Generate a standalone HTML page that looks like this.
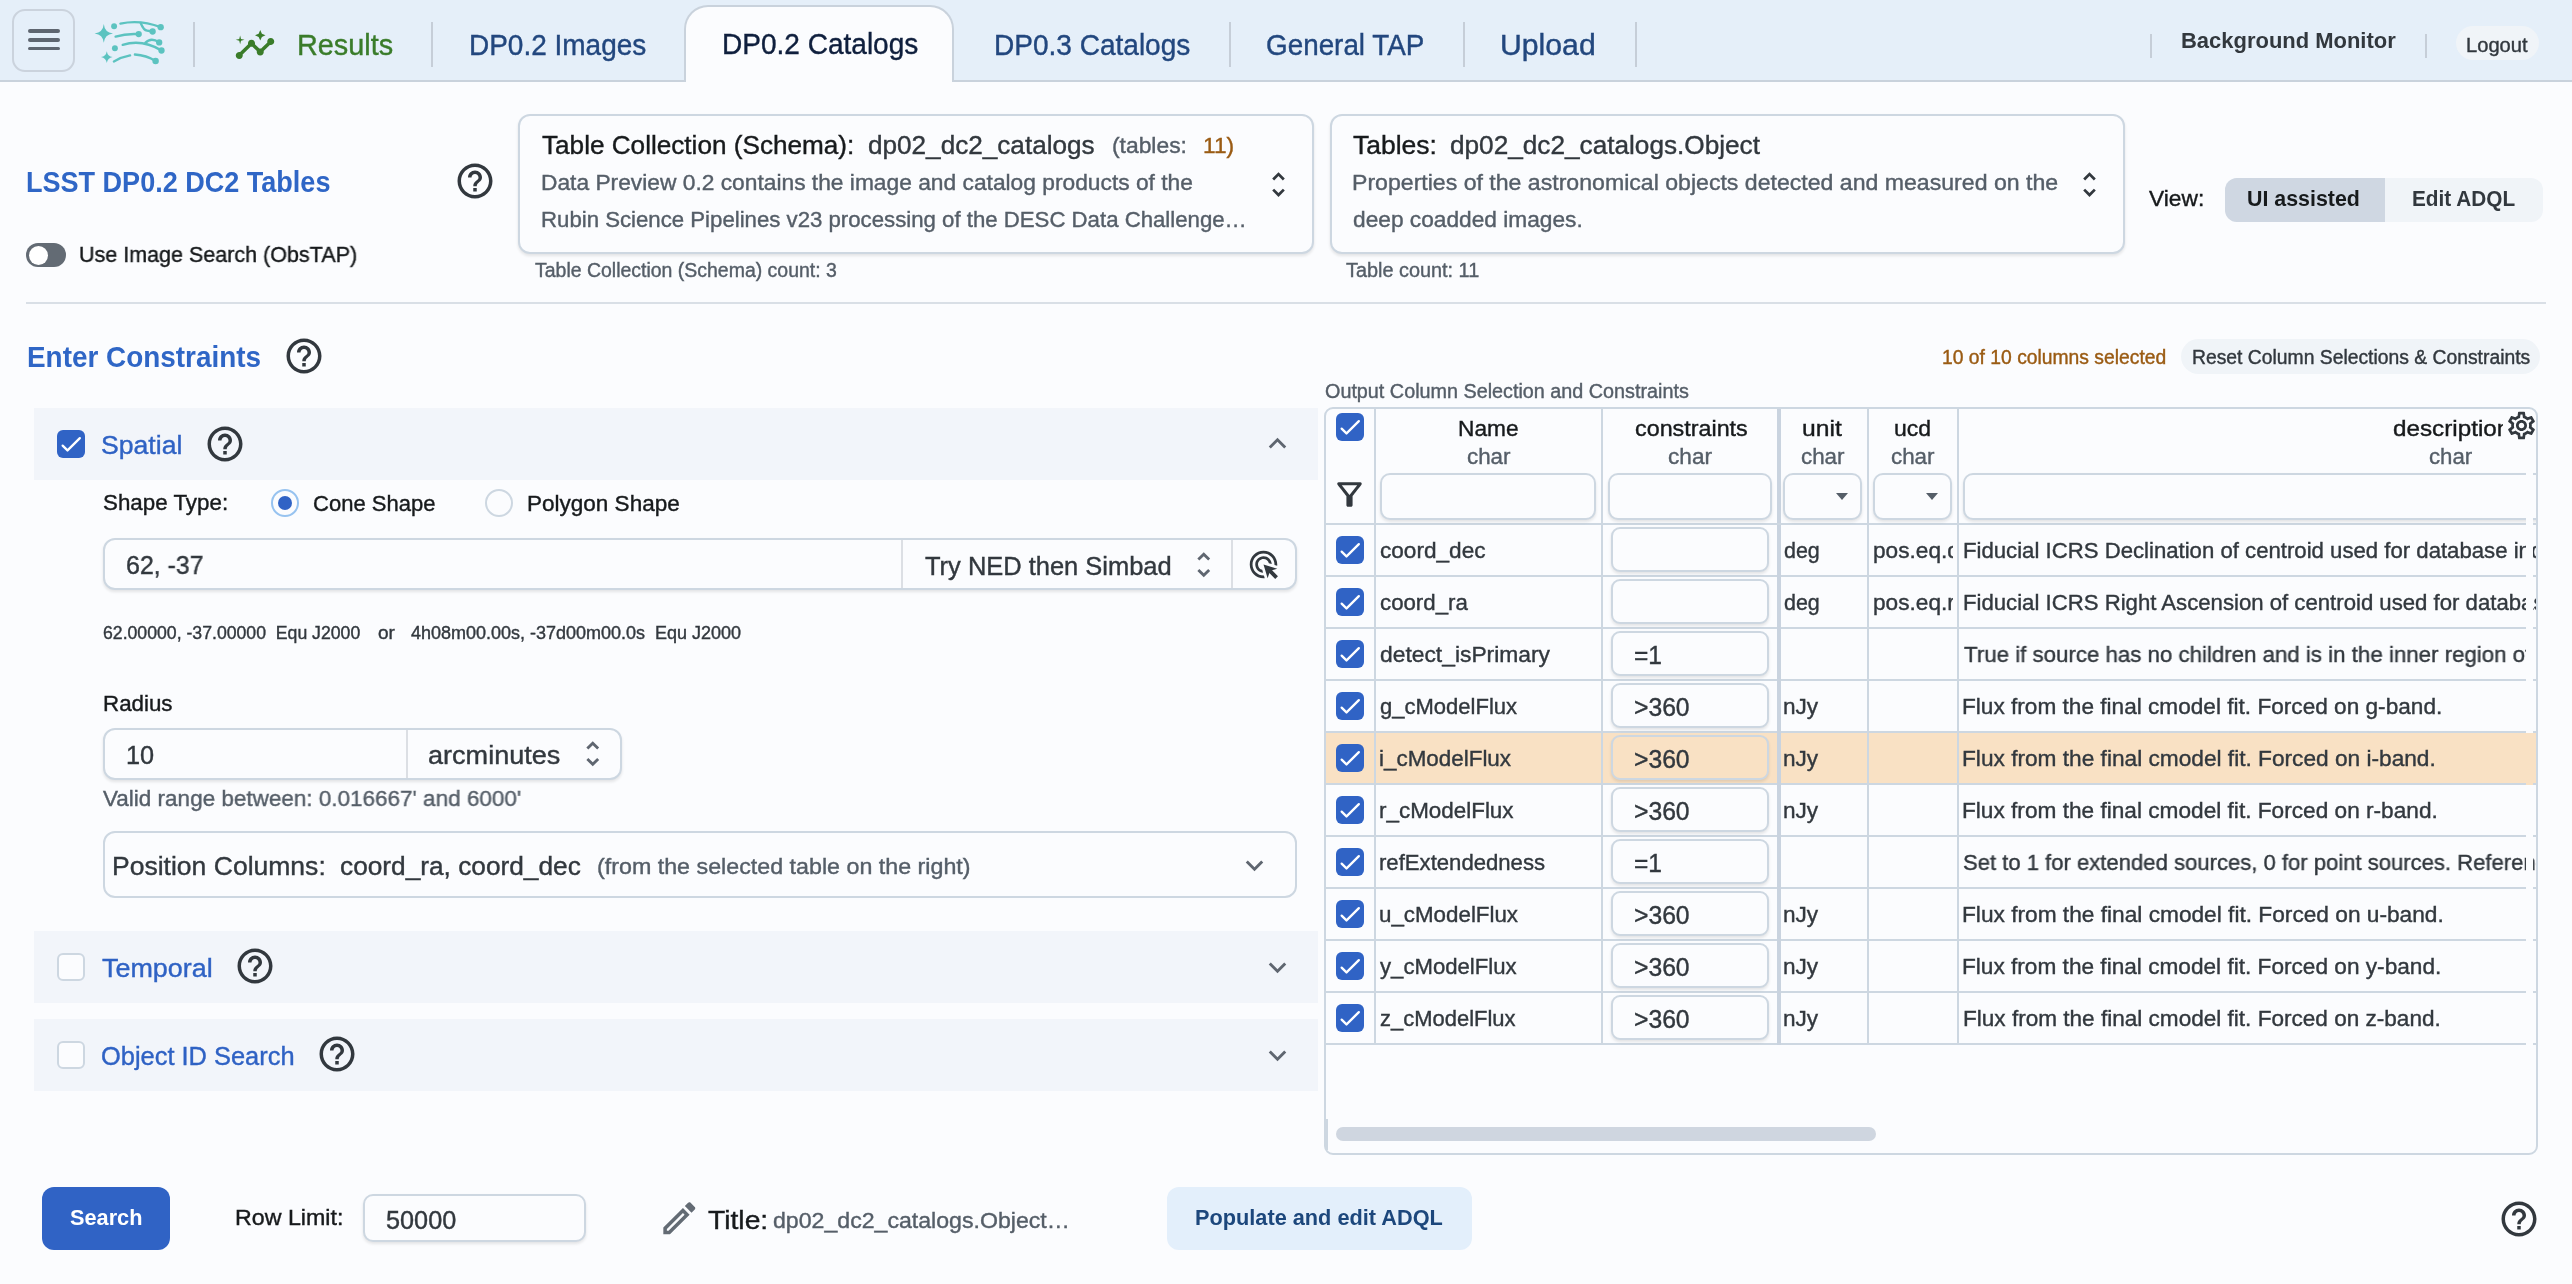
<!DOCTYPE html>
<html><head><meta charset="utf-8"><title>Firefly TAP Search</title><style>
html,body{margin:0;padding:0;width:2572px;height:1284px;}
body{width:2572px;height:1284px;background:#fbfcfe;overflow:hidden;position:relative;font-family:"Liberation Sans",sans-serif;}
#root{position:absolute;left:0;top:0;width:2572px;height:1284px;will-change:transform;}
.b{position:absolute;box-sizing:border-box;}
.t{position:absolute;white-space:pre;line-height:1;-webkit-text-stroke:0.4px;}
</style></head><body><div id="root">
<div class="b" style="left:0px;top:0px;width:2572px;height:82px;background:#e5eff9;border-bottom:2px solid #c9d2dc;"></div>
<div class="b" style="left:12px;top:9px;width:63px;height:63px;border:2px solid #cbd3dd;border-radius:13px;"></div>
<div class="b" style="left:28.2px;top:29.3px;width:31.599999999999998px;height:3.599999999999998px;background:#5f6670;border-radius:2px;"></div>
<div class="b" style="left:28.2px;top:38.1px;width:31.599999999999998px;height:3.5999999999999943px;background:#5f6670;border-radius:2px;"></div>
<div class="b" style="left:28.2px;top:46.900000000000006px;width:31.599999999999998px;height:3.5999999999999943px;background:#5f6670;border-radius:2px;"></div>
<svg class="b" style="left:85px;top:10px" width="100" height="65" viewBox="0 0 100 65"><g fill="#5cc3c0" stroke="none">
<path d="M18.8 13.999999999999998 Q19.628 22.554 28.0 23.4 Q19.628 24.246 18.8 32.8 Q17.972 24.246 9.600000000000001 23.4 Q17.972 22.554 18.8 13.999999999999998 Z"/>
<path d="M21.8 41.2 Q22.612000000000002 46.274 27.6 47.1 Q22.612000000000002 47.926 21.8 53.0 Q20.988 47.926 16.0 47.1 Q20.988 46.274 21.8 41.2 Z"/>
<circle cx="29.1" cy="16.3" r="2.950"/><circle cx="29.9" cy="38.3" r="2.950"/>
<circle cx="75.700" cy="17.200" r="3.150"/><circle cx="67.600" cy="21.500" r="3.150"/><circle cx="53.700" cy="24.100" r="3.150"/>
<circle cx="74.200" cy="32.400" r="3.150"/><circle cx="76.500" cy="40.500" r="3.150"/><circle cx="70.600" cy="51.100" r="3.250"/>
</g>
<g fill="none" stroke="#5cc3c0" stroke-width="2.350" stroke-linecap="round">
<path d="M35.400 13.600 C46 11.300 60 11.200 75.700 17.200"/>
<path d="M55.700 13 C57.500 17.500 59 20.300 62 20.600 L67.600 21.500"/>
<path d="M30.600 26.600 C38 24.300 45 23.600 53.700 24.100"/>
<path d="M37.700 34.900 C50 31 64 33 76.500 40.500"/>
<path d="M60.300 32.900 C63.500 29.500 68 28.300 74.200 32.400"/>
<path d="M28.900 51.400 C34 48.500 39 46.500 45.100 45.400"/>
<path d="M49.900 44.500 C58 45 65 47.500 70.600 51.100"/>
</g></svg>
<div class="b" style="left:193px;top:22px;width:2px;height:45px;background:#c6ced8;"></div>
<div class="b" style="left:431px;top:22px;width:2px;height:45px;background:#c6ced8;"></div>
<div class="b" style="left:1229px;top:22px;width:2px;height:45px;background:#c6ced8;"></div>
<div class="b" style="left:1463px;top:22px;width:2px;height:45px;background:#c6ced8;"></div>
<div class="b" style="left:1635px;top:22px;width:2px;height:45px;background:#c6ced8;"></div>
<div class="b" style="left:2150px;top:34px;width:2px;height:24px;background:#c6ced8;"></div>
<div class="b" style="left:2425px;top:34px;width:2px;height:24px;background:#c6ced8;"></div>
<svg class="b" style="left:233.5px;top:23.6px;" width="42" height="42" viewBox="0 0 24 24" fill="#3a7c2a"><path d="M21 8c-1.450 0-2.260 1.440-1.930 2.510l-3.550 3.560c-.300-.090-.740-.090-1.040 0l-2.550-2.550C12.270 10.450 11.460 9 10 9c-1.450 0-2.270 1.440-1.930 2.520l-4.560 4.550C2.440 15.740 1 16.550 1 18c0 1.100.900 2 2 2 1.450 0 2.260-1.440 1.930-2.510l4.550-4.560c.300.090.740.090 1.040 0l2.550 2.550C12.730 16.550 13.540 18 15 18c1.450 0 2.270-1.440 1.930-2.520l3.560-3.550c1.070.330 2.510-.480 2.510-1.930 0-1.100-.900-2-2-2z"/><path transform="translate(0,0.45)" d="m15 9 .940-2.070L18 6l-2.060-.930L15 3l-.920 2.070L12 6l2.080.930z"/><path transform="translate(0,0.5)" d="M3.500 11 4 9l2-.500L4 8l-.500-2L3 8l-2 .500L3 9z"/></svg>
<span class="t" style="top:29.61px;font-size:30px;color:#3a7c2a;left:296.58px;transform:scaleX(0.9605);transform-origin:0 0;">Results</span>
<span class="t" style="top:29.61px;font-size:30px;color:#22477e;left:468.63px;transform:scaleX(0.9327);transform-origin:0 0;">DP0.2 Images</span>
<div class="b" style="left:684px;top:5px;width:270px;height:77px;background:#fbfcfe;border:2px solid #c9d2dc;border-radius:24px 24px 0 0;border-bottom:none;"></div>
<span class="t" style="top:29.11px;font-size:30px;color:#0f1f3d;left:721.63px;transform:scaleX(0.9343);transform-origin:0 0;">DP0.2 Catalogs</span>
<span class="t" style="top:29.61px;font-size:30px;color:#22477e;left:993.63px;transform:scaleX(0.9343);transform-origin:0 0;">DP0.3 Catalogs</span>
<span class="t" style="top:29.61px;font-size:30px;color:#22477e;left:1266.07px;transform:scaleX(0.9281);transform-origin:0 0;">General TAP</span>
<span class="t" style="top:29.61px;font-size:30px;color:#22477e;left:1500.49px;transform:scaleX(1.0067);transform-origin:0 0;">Upload</span>
<span class="t" style="top:30.45px;font-size:22.5px;color:#32383e;font-weight:700;-webkit-text-stroke:0;left:2181.02px;transform:scaleX(0.9761);transform-origin:0 0;">Background Monitor</span>
<div class="b" style="left:2456px;top:26px;width:83px;height:34px;background:#f0f4f8;border-radius:17px;"></div>
<span class="t" style="top:34.57px;font-size:20px;color:#32383e;left:2465.99px;transform:scaleX(1.0063);transform-origin:0 0;">Logout</span>
<span class="t" style="top:167.10px;font-size:30px;color:#2f66c6;font-weight:700;-webkit-text-stroke:0;left:26.20px;transform:scaleX(0.9010);transform-origin:0 0;">LSST DP0.2 DC2 Tables</span>
<svg class="b" style="left:454.2px;top:159.5px;" width="42" height="42" viewBox="0 0 24 24" fill="#32383e"><path d="M11 18h2v-2h-2v2zm1-16C6.48 2 2 6.48 2 12s4.48 10 10 10 10-4.48 10-10S17.52 2 12 2zm0 18c-4.41 0-8-3.59-8-8s3.59-8 8-8 8 3.590 8 8-3.590 8-8 8zm0-14c-2.210 0-4 1.790-4 4h2c0-1.100.900-2 2-2s2 .900 2 2c0 2-3 1.750-3 5h2c0-2.250 3-2.500 3-5 0-2.210-1.790-4-4-4z"/></svg>
<div class="b" style="left:26px;top:243px;width:40px;height:24px;background:#636b74;border-radius:12px;"></div>
<div class="b" style="left:28.5px;top:245.5px;width:19.0px;height:19.0px;background:#fff;border-radius:10px;"></div>
<span class="t" style="top:244.15px;font-size:22.5px;color:#171a1c;left:78.54px;transform:scaleX(0.9560);transform-origin:0 0;">Use Image Search (ObsTAP)</span>
<div class="b" style="left:518px;top:114px;width:796px;height:140px;background:#fbfcfe;border:2px solid #cdd7e1;border-radius:12px;box-shadow:0 2px 3px rgba(21,21,21,0.10);"></div>
<span class="t" style="top:132.02px;font-size:26.2px;color:#171a1c;left:542.00px;transform:scaleX(0.9979);transform-origin:0 0;">Table Collection (Schema):</span>
<span class="t" style="top:132.02px;font-size:26.2px;color:#32383e;left:868.00px;transform:scaleX(0.9976);transform-origin:0 0;">dp02_dc2_catalogs</span>
<span class="t" style="top:135.21px;font-size:22.2px;color:#555e68;left:1112.27px;transform:scaleX(1.0298);transform-origin:0 0;">(tables:</span>
<span class="t" style="top:135.21px;font-size:22.2px;color:#9a5b13;left:1203.28px;transform:scaleX(1.0230);transform-origin:0 0;">11)</span>
<span class="t" style="top:171.81px;font-size:22.2px;color:#555e68;left:540.97px;transform:scaleX(1.0263);transform-origin:0 0;">Data Preview 0.2 contains the image and catalog products of the</span>
<span class="t" style="top:208.61px;font-size:22.2px;color:#555e68;left:541.00px;transform:scaleX(1.0005);transform-origin:0 0;">Rubin Science Pipelines v23 processing of the DESC Data Challenge…</span>
<svg class="b" style="left:1262.3px;top:168.3px;" width="33" height="33" viewBox="0 0 24 24" fill="#32383e"><path d="M12 5.83 15.17 9l1.41-1.41L12 3 7.41 7.59 8.83 9 12 5.83zm0 12.34L8.83 15l-1.41 1.41L12 21l4.59-4.59L15.17 15 12 18.170z"/></svg>
<span class="t" style="top:261.38px;font-size:19.4px;color:#555e68;left:535.30px;transform:scaleX(1.0039);transform-origin:0 0;">Table Collection (Schema) count: 3</span>
<div class="b" style="left:1330px;top:114px;width:795px;height:140px;background:#fbfcfe;border:2px solid #cdd7e1;border-radius:12px;box-shadow:0 2px 3px rgba(21,21,21,0.10);"></div>
<span class="t" style="top:132.02px;font-size:26.2px;color:#171a1c;left:1352.70px;transform:scaleX(1.0112);transform-origin:0 0;">Tables:</span>
<span class="t" style="top:132.02px;font-size:26.2px;color:#32383e;left:1450.30px;transform:scaleX(0.9996);transform-origin:0 0;">dp02_dc2_catalogs.Object</span>
<span class="t" style="top:171.81px;font-size:22.2px;color:#555e68;left:1351.66px;transform:scaleX(1.0409);transform-origin:0 0;">Properties of the astronomical objects detected and measured on the</span>
<span class="t" style="top:208.61px;font-size:22.2px;color:#555e68;left:1352.70px;transform:scaleX(1.0235);transform-origin:0 0;">deep coadded images.</span>
<svg class="b" style="left:2073.3px;top:168.3px;" width="33" height="33" viewBox="0 0 24 24" fill="#32383e"><path d="M12 5.83 15.17 9l1.41-1.41L12 3 7.41 7.59 8.83 9 12 5.83zm0 12.34L8.83 15l-1.41 1.41L12 21l4.59-4.59L15.17 15 12 18.170z"/></svg>
<span class="t" style="top:261.38px;font-size:19.4px;color:#555e68;left:1346.00px;transform:scaleX(1.0240);transform-origin:0 0;">Table count: 11</span>
<span class="t" style="top:187.95px;font-size:22.5px;color:#171a1c;left:2149.00px;transform:scaleX(1.0120);transform-origin:0 0;">View:</span>
<div class="b" style="left:2225px;top:178px;width:318px;height:44px;background:#f0f4f8;border-radius:12px;"></div>
<div class="b" style="left:2225px;top:178px;width:160px;height:44px;background:#cfd7e2;border-radius:12px 0 0 12px;"></div>
<span class="t" style="top:187.95px;font-size:22.5px;color:#171a1c;font-weight:700;-webkit-text-stroke:0;left:2247.35px;transform:scaleX(0.9499);transform-origin:0 0;">UI assisted</span>
<span class="t" style="top:187.95px;font-size:22.5px;color:#32383e;font-weight:700;-webkit-text-stroke:0;left:2412.38px;transform:scaleX(0.9235);transform-origin:0 0;">Edit ADQL</span>
<div class="b" style="left:26px;top:302px;width:2520px;height:2px;background:#d9dfe6;"></div>
<span class="t" style="top:342.41px;font-size:30px;color:#2f66c6;font-weight:700;-webkit-text-stroke:0;left:26.64px;transform:scaleX(0.9296);transform-origin:0 0;">Enter Constraints</span>
<svg class="b" style="left:283.2px;top:335.4px;" width="42" height="42" viewBox="0 0 24 24" fill="#32383e"><path d="M11 18h2v-2h-2v2zm1-16C6.48 2 2 6.48 2 12s4.48 10 10 10 10-4.48 10-10S17.52 2 12 2zm0 18c-4.41 0-8-3.59-8-8s3.59-8 8-8 8 3.590 8 8-3.590 8-8 8zm0-14c-2.210 0-4 1.790-4 4h2c0-1.100.900-2 2-2s2 .900 2 2c0 2-3 1.750-3 5h2c0-2.250 3-2.500 3-5 0-2.210-1.790-4-4-4z"/></svg>
<div class="b" style="left:34px;top:408px;width:1284px;height:72px;background:#f2f5fa;"></div>
<div class="b" style="left:57px;top:430px;width:28px;height:28px;background:#3063c5;border-radius:6px;"><svg style="position:absolute;left:0;top:0" width="28" height="28" viewBox="0 0 24 24" fill="#fff"><path d="M9 16.170 5.530 12.700a.9959.9959 0 0 0-1.410 0c-.390.390-.390 1.020 0 1.410l4.180 4.180c.390.390 1.020.390 1.410 0L20.290 7.710c.390-.390.390-1.020 0-1.410a.9959.9959 0 0 0-1.410 0L9 16.170z"/></svg></div>
<span class="t" style="top:432.15px;font-size:26.4px;color:#2f62c4;left:100.99px;transform:scaleX(1.0085);transform-origin:0 0;">Spatial</span>
<svg class="b" style="left:204.0px;top:422.5px;" width="42" height="42" viewBox="0 0 24 24" fill="#32383e"><path d="M11 18h2v-2h-2v2zm1-16C6.48 2 2 6.48 2 12s4.48 10 10 10 10-4.48 10-10S17.52 2 12 2zm0 18c-4.41 0-8-3.59-8-8s3.59-8 8-8 8 3.590 8 8-3.590 8-8 8zm0-14c-2.210 0-4 1.790-4 4h2c0-1.100.900-2 2-2s2 .900 2 2c0 2-3 1.750-3 5h2c0-2.250 3-2.500 3-5 0-2.210-1.790-4-4-4z"/></svg>
<svg class="b" style="left:1259.5px;top:426.0px;" width="35" height="35" viewBox="0 0 24 24" fill="#5f6670"><path d="M7.41 15.41 12 10.83l4.59 4.58L18 14l-6-6-6 6z"/></svg>
<span class="t" style="top:492.25px;font-size:22.5px;color:#171a1c;left:103.01px;transform:scaleX(0.9936);transform-origin:0 0;">Shape Type:</span>
<div class="b" style="left:271px;top:489px;width:28px;height:28px;background:#fbfcfe;border:2px solid #97c3f0;border-radius:14px;"></div>
<div class="b" style="left:278px;top:496px;width:14px;height:14px;background:#3063c5;border-radius:7px;"></div>
<span class="t" style="top:492.75px;font-size:22.5px;color:#171a1c;left:312.82px;transform:scaleX(0.9783);transform-origin:0 0;">Cone Shape</span>
<div class="b" style="left:485px;top:489px;width:28px;height:28px;background:#fbfcfe;border:2px solid #cdd7e1;border-radius:14px;"></div>
<span class="t" style="top:492.75px;font-size:22.5px;color:#171a1c;left:526.80px;transform:scaleX(1.0006);transform-origin:0 0;">Polygon Shape</span>
<div class="b" style="left:103px;top:538px;width:1194px;height:52px;background:#fbfcfe;border:2px solid #cdd7e1;border-radius:12px;box-shadow:0 2px 3px rgba(21,21,21,0.10);"></div>
<div class="b" style="left:901px;top:540px;width:2px;height:48px;background:#dcdfe4;"></div>
<div class="b" style="left:1231px;top:540px;width:2px;height:48px;background:#dcdfe4;"></div>
<span class="t" style="top:553.04px;font-size:25px;color:#32383e;left:125.60px;transform:scaleX(0.9957);transform-origin:0 0;">62, -37</span>
<span class="t" style="top:553.54px;font-size:25px;color:#32383e;left:924.80px;transform:scaleX(1.0182);transform-origin:0 0;">Try NED then Simbad</span>
<svg class="b" style="left:1187.05px;top:547.55px;" width="33.5" height="33.5" viewBox="0 0 24 24" fill="#5f6670"><path d="M12 5.83 15.17 9l1.41-1.41L12 3 7.41 7.59 8.83 9 12 5.83zm0 12.34L8.83 15l-1.41 1.41L12 21l4.59-4.59L15.17 15 12 18.170z"/></svg>
<svg class="b" style="left:1247.0px;top:548.0px;" width="33" height="33" viewBox="0 0 24 24" fill="#32383e"><path d="M11.710 17.990C8.530 17.840 6 15.220 6 12c0-3.310 2.690-6 6-6 3.220 0 5.840 2.530 5.990 5.710l-2.100-.630C15.480 9.310 13.890 8 12 8c-2.210 0-4 1.790-4 4 0 1.890 1.310 3.480 3.080 3.890l.630 2.100zM22 12c0 .300-.010.600-.040.900l-1.970-.590c.010-.100.010-.210.010-.310 0-4.420-3.580-8-8-8s-8 3.580-8 8 3.580 8 8 8c.100 0 .210 0 .310-.010l.590 1.970c-.300.030-.600.040-.900.040-5.520 0-10-4.480-10-10S6.480 2 12 2s10 4.480 10 10zm-3.770 4.260L22 15l-10-3 3 10 1.260-3.770 4.270 4.270 1.980-1.980-4.280-4.260z"/></svg>
<span class="t" style="top:623.76px;font-size:18px;color:#32383e;left:103.40px;transform:scaleX(0.9809);transform-origin:0 0;">62.00000, -37.00000  Equ J2000</span>
<span class="t" style="top:623.76px;font-size:18px;color:#32383e;left:377.80px;transform:scaleX(1.0555);transform-origin:0 0;">or</span>
<span class="t" style="top:623.76px;font-size:18px;color:#32383e;left:411.00px;transform:scaleX(0.9993);transform-origin:0 0;">4h08m00.00s, -37d00m00.0s  Equ J2000</span>
<span class="t" style="top:692.85px;font-size:22.5px;color:#171a1c;left:103.01px;transform:scaleX(0.9929);transform-origin:0 0;">Radius</span>
<div class="b" style="left:103px;top:728px;width:518.5px;height:52px;background:#fbfcfe;border:2px solid #cdd7e1;border-radius:12px;box-shadow:0 2px 3px rgba(21,21,21,0.10);"></div>
<div class="b" style="left:406px;top:730px;width:2px;height:48px;background:#dcdfe4;"></div>
<span class="t" style="top:743.34px;font-size:25px;color:#32383e;left:125.99px;transform:scaleX(1.0114);transform-origin:0 0;">10</span>
<span class="t" style="top:743.34px;font-size:25px;color:#32383e;left:428.42px;transform:scaleX(1.0823);transform-origin:0 0;">arcminutes</span>
<svg class="b" style="left:576.25px;top:737.05px;" width="33.5" height="33.5" viewBox="0 0 24 24" fill="#5f6670"><path d="M12 5.83 15.17 9l1.41-1.41L12 3 7.41 7.59 8.83 9 12 5.83zm0 12.34L8.83 15l-1.41 1.41L12 21l4.59-4.59L15.17 15 12 18.170z"/></svg>
<span class="t" style="top:788.05px;font-size:22.5px;color:#555e68;left:103.40px;transform:scaleX(0.9990);transform-origin:0 0;">Valid range between: 0.016667' and 6000'</span>
<div class="b" style="left:103px;top:831px;width:1194px;height:67px;background:#fbfcfe;border:2px solid #cdd7e1;border-radius:12px;"></div>
<span class="t" style="top:852.75px;font-size:26.4px;color:#32383e;left:111.99px;transform:scaleX(1.0050);transform-origin:0 0;">Position Columns:</span>
<span class="t" style="top:852.75px;font-size:26.4px;color:#32383e;left:340.01px;transform:scaleX(0.9947);transform-origin:0 0;">coord_ra, coord_dec</span>
<span class="t" style="top:855.75px;font-size:22.5px;color:#555e68;left:596.97px;transform:scaleX(1.0335);transform-origin:0 0;">(from the selected table on the right)</span>
<svg class="b" style="left:1237.1px;top:847.5px;" width="35" height="35" viewBox="0 0 24 24" fill="#5f6670"><path d="M7.41 8.59 12 13.17l4.59-4.58L18 10l-6 6-6-6 1.41-1.41z"/></svg>
<div class="b" style="left:34px;top:931px;width:1284px;height:72px;background:#f2f5fa;"></div>
<div class="b" style="left:57px;top:953px;width:27.5px;height:27.5px;background:#fbfcfe;border:2px solid #cdd7e1;border-radius:6px;"></div>
<span class="t" style="top:954.65px;font-size:26.4px;color:#2f62c4;left:102.00px;transform:scaleX(1.0197);transform-origin:0 0;">Temporal</span>
<svg class="b" style="left:234.2px;top:945.4px;" width="42" height="42" viewBox="0 0 24 24" fill="#32383e"><path d="M11 18h2v-2h-2v2zm1-16C6.48 2 2 6.48 2 12s4.48 10 10 10 10-4.48 10-10S17.52 2 12 2zm0 18c-4.41 0-8-3.59-8-8s3.59-8 8-8 8 3.590 8 8-3.590 8-8 8zm0-14c-2.210 0-4 1.790-4 4h2c0-1.100.900-2 2-2s2 .900 2 2c0 2-3 1.750-3 5h2c0-2.250 3-2.500 3-5 0-2.210-1.790-4-4-4z"/></svg>
<svg class="b" style="left:1259.8px;top:950.2px;" width="35" height="35" viewBox="0 0 24 24" fill="#5f6670"><path d="M7.41 8.59 12 13.17l4.59-4.58L18 10l-6 6-6-6 1.41-1.41z"/></svg>
<div class="b" style="left:34px;top:1019px;width:1284px;height:72px;background:#f2f5fa;"></div>
<div class="b" style="left:57px;top:1041px;width:27.5px;height:27.5px;background:#fbfcfe;border:2px solid #cdd7e1;border-radius:6px;"></div>
<span class="t" style="top:1042.65px;font-size:26.4px;color:#2f62c4;left:101.04px;transform:scaleX(0.9633);transform-origin:0 0;">Object ID Search</span>
<svg class="b" style="left:316.2px;top:1033.4px;" width="42" height="42" viewBox="0 0 24 24" fill="#32383e"><path d="M11 18h2v-2h-2v2zm1-16C6.48 2 2 6.48 2 12s4.48 10 10 10 10-4.48 10-10S17.52 2 12 2zm0 18c-4.41 0-8-3.59-8-8s3.59-8 8-8 8 3.590 8 8-3.590 8-8 8zm0-14c-2.210 0-4 1.790-4 4h2c0-1.100.900-2 2-2s2 .900 2 2c0 2-3 1.750-3 5h2c0-2.250 3-2.500 3-5 0-2.210-1.790-4-4-4z"/></svg>
<svg class="b" style="left:1259.8px;top:1038.2px;" width="35" height="35" viewBox="0 0 24 24" fill="#5f6670"><path d="M7.41 8.59 12 13.17l4.59-4.58L18 10l-6 6-6-6 1.41-1.41z"/></svg>
<div class="b" style="left:42px;top:1187px;width:128px;height:63px;background:#3063c5;border-radius:12px;"></div>
<span class="t" style="top:1207.45px;font-size:22.5px;color:#fff;font-weight:700;-webkit-text-stroke:0;left:70.00px;transform:scaleX(0.9650);transform-origin:0 0;">Search</span>
<span class="t" style="top:1207.45px;font-size:22.5px;color:#171a1c;left:234.57px;transform:scaleX(1.0324);transform-origin:0 0;">Row Limit:</span>
<div class="b" style="left:363px;top:1194.3px;width:223px;height:48.200000000000045px;background:#fbfcfe;border:2px solid #cdd7e1;border-radius:10px;box-shadow:0 2px 3px rgba(21,21,21,0.10);"></div>
<span class="t" style="top:1207.84px;font-size:25px;color:#32383e;left:385.69px;transform:scaleX(1.0101);transform-origin:0 0;">50000</span>
<svg class="b" style="left:658px;top:1197.4px;" width="42.6" height="42.6" viewBox="0 0 24 24" fill="#636b74"><path d="m14.060 9.020.920.920L5.920 19H5v-.920l9.060-9.060M17.660 3c-.250 0-.510.100-.700.290l-1.830 1.830 3.750 3.750 1.830-1.830c.390-.390.390-1.020 0-1.410l-2.340-2.340c-.200-.200-.450-.290-.710-.290zm-3.600 3.190L3 17.250V21h3.750L17.810 9.940l-3.750-3.750z"/></svg>
<span class="t" style="top:1207.15px;font-size:26.4px;color:#171a1c;left:708.00px;transform:scaleX(1.0710);transform-origin:0 0;">Title:</span>
<span class="t" style="top:1210.45px;font-size:22.5px;color:#555e68;left:772.70px;transform:scaleX(1.0274);transform-origin:0 0;">dp02_dc2_catalogs.Object…</span>
<div class="b" style="left:1167px;top:1187px;width:305px;height:63px;background:#e3effb;border-radius:12px;"></div>
<span class="t" style="top:1207.45px;font-size:22.5px;color:#1c477c;font-weight:700;-webkit-text-stroke:0;left:1194.53px;transform:scaleX(0.9655);transform-origin:0 0;">Populate and edit ADQL</span>
<svg class="b" style="left:2498.2px;top:1197.5px;" width="42" height="42" viewBox="0 0 24 24" fill="#32383e"><path d="M11 18h2v-2h-2v2zm1-16C6.48 2 2 6.48 2 12s4.48 10 10 10 10-4.48 10-10S17.52 2 12 2zm0 18c-4.41 0-8-3.59-8-8s3.59-8 8-8 8 3.590 8 8-3.590 8-8 8zm0-14c-2.210 0-4 1.790-4 4h2c0-1.100.900-2 2-2s2 .900 2 2c0 2-3 1.750-3 5h2c0-2.250 3-2.500 3-5 0-2.210-1.790-4-4-4z"/></svg>
<span class="t" style="top:347.68px;font-size:19.4px;color:#9a5b13;left:1941.50px;transform:scaleX(0.9955);transform-origin:0 0;">10 of 10 columns selected</span>
<div class="b" style="left:2181px;top:339px;width:359px;height:35px;background:#f0f4f8;border-radius:18px;"></div>
<span class="t" style="top:347.68px;font-size:19.4px;color:#32383e;left:2191.70px;transform:scaleX(0.9962);transform-origin:0 0;">Reset Column Selections &amp; Constraints</span>
<span class="t" style="top:381.88px;font-size:19.4px;color:#555e68;left:1324.50px;transform:scaleX(1.0197);transform-origin:0 0;">Output Column Selection and Constraints</span>
<!--TABLE-START-->
<div class="b" style="left:0;top:0;width:2572px;height:1284px;clip-path:inset(407px 34px 129px 1323.7px round 9px);">
<div class="b" style="left:1325.7px;top:574.5px;width:1200.3px;height:2.0px;background:#cdd7e1;"></div>
<div class="b" style="left:2533px;top:574.5px;width:3px;height:2.0px;background:#cdd7e1;"></div>
<span class="t" style="top:539.65px;font-size:22.5px;color:#32383e;left:1380.20px;transform:scaleX(1.0045);transform-origin:0 0;">coord_dec</span>
<div class="b" style="left:1610.5px;top:527.1px;width:158.0px;height:45.39999999999998px;background:#fbfcfe;border:2px solid #cdd7e1;border-radius:9px;box-shadow:0 2px 3px rgba(21,21,21,0.10);"></div>
<span class="t" style="top:539.65px;font-size:22.5px;color:#32383e;left:1783.50px;transform:scaleX(0.9534);transform-origin:0 0;">deg</span>
<div class="b" style="left:1869px;top:0;width:84px;height:1284px;overflow:hidden"><div class="b" style="left:-1869px;top:0"><span class="t" style="top:539.65px;font-size:22.5px;color:#32383e;left:1872.69px;transform:scaleX(1.0070);transform-origin:0 0;">pos.eq.dec;meta.main</span></div></div>
<span class="t" style="top:539.65px;font-size:22.5px;color:#32383e;left:1962.52px;transform:scaleX(0.9850);transform-origin:0 0;">Fiducial ICRS Declination of centroid used for database indexing</span>
<div class="b" style="left:1325.7px;top:626.5px;width:1200.3px;height:2.0px;background:#cdd7e1;"></div>
<div class="b" style="left:2533px;top:626.5px;width:3px;height:2.0px;background:#cdd7e1;"></div>
<span class="t" style="top:591.65px;font-size:22.5px;color:#32383e;left:1380.20px;transform:scaleX(0.9889);transform-origin:0 0;">coord_ra</span>
<div class="b" style="left:1610.5px;top:579.1px;width:158.0px;height:45.39999999999998px;background:#fbfcfe;border:2px solid #cdd7e1;border-radius:9px;box-shadow:0 2px 3px rgba(21,21,21,0.10);"></div>
<span class="t" style="top:591.65px;font-size:22.5px;color:#32383e;left:1783.50px;transform:scaleX(0.9534);transform-origin:0 0;">deg</span>
<div class="b" style="left:1869px;top:0;width:84px;height:1284px;overflow:hidden"><div class="b" style="left:-1869px;top:0"><span class="t" style="top:591.65px;font-size:22.5px;color:#32383e;left:1872.69px;transform:scaleX(1.0070);transform-origin:0 0;">pos.eq.ra;meta.main</span></div></div>
<span class="t" style="top:591.65px;font-size:22.5px;color:#32383e;left:1962.52px;transform:scaleX(0.9850);transform-origin:0 0;">Fiducial ICRS Right Ascension of centroid used for database indexing</span>
<div class="b" style="left:1325.7px;top:678.5px;width:1200.3px;height:2.0px;background:#cdd7e1;"></div>
<div class="b" style="left:2533px;top:678.5px;width:3px;height:2.0px;background:#cdd7e1;"></div>
<span class="t" style="top:643.65px;font-size:22.5px;color:#32383e;left:1380.20px;transform:scaleX(1.0148);transform-origin:0 0;">detect_isPrimary</span>
<div class="b" style="left:1610.5px;top:631.1px;width:158.0px;height:45.39999999999998px;background:#fbfcfe;border:2px solid #cdd7e1;border-radius:9px;box-shadow:0 2px 3px rgba(21,21,21,0.10);"></div>
<span class="t" style="top:643.04px;font-size:25px;color:#32383e;left:1633.92px;transform:scaleX(0.9812);transform-origin:0 0;">=1</span>
<span class="t" style="top:643.65px;font-size:22.5px;color:#32383e;left:1963.50px;transform:scaleX(0.9895);transform-origin:0 0;">True if source has no children and is in the inner region of a coadd patch</span>
<div class="b" style="left:1325.7px;top:730.5px;width:1200.3px;height:2.0px;background:#cdd7e1;"></div>
<div class="b" style="left:2533px;top:730.5px;width:3px;height:2.0px;background:#cdd7e1;"></div>
<span class="t" style="top:695.65px;font-size:22.5px;color:#32383e;left:1380.20px;transform:scaleX(0.9786);transform-origin:0 0;">g_cModelFlux</span>
<div class="b" style="left:1610.5px;top:683.1px;width:158.0px;height:45.39999999999998px;background:#fbfcfe;border:2px solid #cdd7e1;border-radius:9px;box-shadow:0 2px 3px rgba(21,21,21,0.10);"></div>
<span class="t" style="top:695.04px;font-size:25px;color:#32383e;left:1633.91px;transform:scaleX(0.9870);transform-origin:0 0;">&gt;360</span>
<span class="t" style="top:695.65px;font-size:22.5px;color:#32383e;left:1782.50px;transform:scaleX(1.0039);transform-origin:0 0;">nJy</span>
<span class="t" style="top:695.65px;font-size:22.5px;color:#32383e;left:1962.49px;transform:scaleX(1.0053);transform-origin:0 0;">Flux from the final cmodel fit. Forced on g-band.</span>
<div class="b" style="left:1325.7px;top:732.5px;width:1210.3px;height:52.0px;background:#f9e1c4;"></div>
<div class="b" style="left:1325.7px;top:782.5px;width:1200.3px;height:2.0px;background:#cdd7e1;"></div>
<div class="b" style="left:2533px;top:782.5px;width:3px;height:2.0px;background:#cdd7e1;"></div>
<span class="t" style="top:747.65px;font-size:22.5px;color:#32383e;left:1379.20px;transform:scaleX(0.9962);transform-origin:0 0;">i_cModelFlux</span>
<div class="b" style="left:1610.5px;top:735.1px;width:158.0px;height:45.39999999999998px;background:#f9e1c4;border:2px solid #cdd7e1;border-radius:9px;box-shadow:0 2px 3px rgba(21,21,21,0.10);"></div>
<span class="t" style="top:747.04px;font-size:25px;color:#32383e;left:1633.91px;transform:scaleX(0.9870);transform-origin:0 0;">&gt;360</span>
<span class="t" style="top:747.65px;font-size:22.5px;color:#32383e;left:1782.50px;transform:scaleX(1.0039);transform-origin:0 0;">nJy</span>
<span class="t" style="top:747.65px;font-size:22.5px;color:#32383e;left:1962.49px;transform:scaleX(1.0076);transform-origin:0 0;">Flux from the final cmodel fit. Forced on i-band.</span>
<div class="b" style="left:1325.7px;top:834.5px;width:1200.3px;height:2.0px;background:#cdd7e1;"></div>
<div class="b" style="left:2533px;top:834.5px;width:3px;height:2.0px;background:#cdd7e1;"></div>
<span class="t" style="top:799.65px;font-size:22.5px;color:#32383e;left:1379.20px;transform:scaleX(0.9963);transform-origin:0 0;">r_cModelFlux</span>
<div class="b" style="left:1610.5px;top:787.1px;width:158.0px;height:45.39999999999998px;background:#fbfcfe;border:2px solid #cdd7e1;border-radius:9px;box-shadow:0 2px 3px rgba(21,21,21,0.10);"></div>
<span class="t" style="top:799.04px;font-size:25px;color:#32383e;left:1633.91px;transform:scaleX(0.9870);transform-origin:0 0;">&gt;360</span>
<span class="t" style="top:799.65px;font-size:22.5px;color:#32383e;left:1782.50px;transform:scaleX(1.0039);transform-origin:0 0;">nJy</span>
<span class="t" style="top:799.65px;font-size:22.5px;color:#32383e;left:1962.49px;transform:scaleX(1.0065);transform-origin:0 0;">Flux from the final cmodel fit. Forced on r-band.</span>
<div class="b" style="left:1325.7px;top:886.5px;width:1200.3px;height:2.0px;background:#cdd7e1;"></div>
<div class="b" style="left:2533px;top:886.5px;width:3px;height:2.0px;background:#cdd7e1;"></div>
<span class="t" style="top:851.65px;font-size:22.5px;color:#32383e;left:1379.22px;transform:scaleX(0.9832);transform-origin:0 0;">refExtendedness</span>
<div class="b" style="left:1610.5px;top:839.1px;width:158.0px;height:45.39999999999998px;background:#fbfcfe;border:2px solid #cdd7e1;border-radius:9px;box-shadow:0 2px 3px rgba(21,21,21,0.10);"></div>
<span class="t" style="top:851.04px;font-size:25px;color:#32383e;left:1633.92px;transform:scaleX(0.9812);transform-origin:0 0;">=1</span>
<span class="t" style="top:851.65px;font-size:22.5px;color:#32383e;left:1962.52px;transform:scaleX(0.9805);transform-origin:0 0;">Set to 1 for extended sources, 0 for point sources. Reference band.</span>
<div class="b" style="left:1325.7px;top:938.5px;width:1200.3px;height:2.0px;background:#cdd7e1;"></div>
<div class="b" style="left:2533px;top:938.5px;width:3px;height:2.0px;background:#cdd7e1;"></div>
<span class="t" style="top:903.65px;font-size:22.5px;color:#32383e;left:1379.21px;transform:scaleX(0.9927);transform-origin:0 0;">u_cModelFlux</span>
<div class="b" style="left:1610.5px;top:891.1px;width:158.0px;height:45.39999999999998px;background:#fbfcfe;border:2px solid #cdd7e1;border-radius:9px;box-shadow:0 2px 3px rgba(21,21,21,0.10);"></div>
<span class="t" style="top:903.04px;font-size:25px;color:#32383e;left:1633.91px;transform:scaleX(0.9870);transform-origin:0 0;">&gt;360</span>
<span class="t" style="top:903.65px;font-size:22.5px;color:#32383e;left:1782.50px;transform:scaleX(1.0039);transform-origin:0 0;">nJy</span>
<span class="t" style="top:903.65px;font-size:22.5px;color:#32383e;left:1962.49px;transform:scaleX(1.0085);transform-origin:0 0;">Flux from the final cmodel fit. Forced on u-band.</span>
<div class="b" style="left:1325.7px;top:990.5px;width:1200.3px;height:2.0px;background:#cdd7e1;"></div>
<div class="b" style="left:2533px;top:990.5px;width:3px;height:2.0px;background:#cdd7e1;"></div>
<span class="t" style="top:955.65px;font-size:22.5px;color:#32383e;left:1380.20px;transform:scaleX(0.9839);transform-origin:0 0;">y_cModelFlux</span>
<div class="b" style="left:1610.5px;top:943.1px;width:158.0px;height:45.39999999999998px;background:#fbfcfe;border:2px solid #cdd7e1;border-radius:9px;box-shadow:0 2px 3px rgba(21,21,21,0.10);"></div>
<span class="t" style="top:955.04px;font-size:25px;color:#32383e;left:1633.91px;transform:scaleX(0.9870);transform-origin:0 0;">&gt;360</span>
<span class="t" style="top:955.65px;font-size:22.5px;color:#32383e;left:1782.50px;transform:scaleX(1.0039);transform-origin:0 0;">nJy</span>
<span class="t" style="top:955.65px;font-size:22.5px;color:#32383e;left:1962.49px;transform:scaleX(1.0059);transform-origin:0 0;">Flux from the final cmodel fit. Forced on y-band.</span>
<div class="b" style="left:1325.7px;top:1042.5px;width:1200.3px;height:2.0px;background:#cdd7e1;"></div>
<div class="b" style="left:2533px;top:1042.5px;width:3px;height:2.0px;background:#cdd7e1;"></div>
<span class="t" style="top:1007.65px;font-size:22.5px;color:#32383e;left:1380.20px;transform:scaleX(0.9767);transform-origin:0 0;">z_cModelFlux</span>
<div class="b" style="left:1610.5px;top:995.1px;width:158.0px;height:45.39999999999998px;background:#fbfcfe;border:2px solid #cdd7e1;border-radius:9px;box-shadow:0 2px 3px rgba(21,21,21,0.10);"></div>
<span class="t" style="top:1007.04px;font-size:25px;color:#32383e;left:1633.91px;transform:scaleX(0.9870);transform-origin:0 0;">&gt;360</span>
<span class="t" style="top:1007.65px;font-size:22.5px;color:#32383e;left:1782.50px;transform:scaleX(1.0039);transform-origin:0 0;">nJy</span>
<span class="t" style="top:1007.65px;font-size:22.5px;color:#32383e;left:1962.50px;transform:scaleX(1.0027);transform-origin:0 0;">Flux from the final cmodel fit. Forced on z-band.</span>
<div class="b" style="left:1374px;top:409px;width:2px;height:635.5px;background:#cdd7e1;"></div>
<div class="b" style="left:1601px;top:409px;width:2px;height:635.5px;background:#cdd7e1;"></div>
<div class="b" style="left:1867px;top:409px;width:2px;height:635.5px;background:#cdd7e1;"></div>
<div class="b" style="left:1957px;top:409px;width:2px;height:635.5px;background:#cdd7e1;"></div>
<div class="b" style="left:1777.2px;top:409px;width:3.7999999999999545px;height:635.5px;background:#c9d3df;"></div>
<div class="b" style="left:1325.7px;top:522.5px;width:1200.3px;height:2.0px;background:#cdd7e1;"></div>
<div class="b" style="left:2533px;top:522.5px;width:3px;height:2.0px;background:#cdd7e1;"></div>
<div class="b" style="left:1325.7px;top:470px;width:1200.3px;height:2px;background:transparent;"></div>
<span class="t" style="top:417.75px;font-size:22.5px;color:#171a1c;left:1458.49px;transform:scaleX(1.0085);transform-origin:0 0;">Name</span>
<span class="t" style="top:417.75px;font-size:22.5px;color:#171a1c;left:1634.50px;transform:scaleX(1.0364);transform-origin:0 0;">constraints</span>
<span class="t" style="top:417.75px;font-size:22.5px;color:#171a1c;left:1802.40px;transform:scaleX(1.0964);transform-origin:0 0;">unit</span>
<span class="t" style="top:417.75px;font-size:22.5px;color:#171a1c;left:1894.48px;transform:scaleX(1.0212);transform-origin:0 0;">ucd</span>
<span class="t" style="top:417.75px;font-size:22.5px;color:#171a1c;left:2393.30px;transform:scaleX(1.0776);transform-origin:0 0;">description</span>
<span class="t" style="top:446.25px;font-size:22.5px;color:#555e68;left:1467.00px;transform:scaleX(0.9937);transform-origin:0 0;">char</span>
<span class="t" style="top:446.25px;font-size:22.5px;color:#555e68;left:1668.00px;transform:scaleX(1.0050);transform-origin:0 0;">char</span>
<span class="t" style="top:446.25px;font-size:22.5px;color:#555e68;left:1801.00px;transform:scaleX(0.9937);transform-origin:0 0;">char</span>
<span class="t" style="top:446.25px;font-size:22.5px;color:#555e68;left:1891.00px;transform:scaleX(0.9937);transform-origin:0 0;">char</span>
<span class="t" style="top:446.25px;font-size:22.5px;color:#555e68;left:2429.00px;transform:scaleX(0.9870);transform-origin:0 0;">char</span>
<div class="b" style="left:1380px;top:472.5px;width:216px;height:47.700000000000045px;background:#fbfcfe;border:2px solid #cdd7e1;border-radius:10px;box-shadow:0 2px 3px rgba(21,21,21,0.10);"></div>
<div class="b" style="left:1607.5px;top:472.5px;width:164.0px;height:47.700000000000045px;background:#fbfcfe;border:2px solid #cdd7e1;border-radius:10px;box-shadow:0 2px 3px rgba(21,21,21,0.10);"></div>
<div class="b" style="left:1783.3px;top:472.5px;width:78.5px;height:47.700000000000045px;background:#fbfcfe;border:2px solid #cdd7e1;border-radius:10px;box-shadow:0 2px 3px rgba(21,21,21,0.10);"></div>
<div class="b" style="left:1873.4px;top:472.5px;width:79.0px;height:47.700000000000045px;background:#fbfcfe;border:2px solid #cdd7e1;border-radius:10px;box-shadow:0 2px 3px rgba(21,21,21,0.10);"></div>
<div class="b" style="left:1963.2px;top:472.5px;width:636.8px;height:47.700000000000045px;background:#fbfcfe;border:2px solid #cdd7e1;border-radius:10px;box-shadow:0 2px 3px rgba(21,21,21,0.10);"></div>
<svg class="b" style="left:1836px;top:493px" width="12" height="7" viewBox="0 0 12 7"><path d="M0 0 L12 0 L6 7 Z" fill="#555e68"/></svg>
<svg class="b" style="left:1926px;top:493px" width="12" height="7" viewBox="0 0 12 7"><path d="M0 0 L12 0 L6 7 Z" fill="#555e68"/></svg>
<div class="b" style="left:1336px;top:413px;width:28px;height:28px;background:#3063c5;border-radius:6px;"><svg style="position:absolute;left:0;top:0" width="28" height="28" viewBox="0 0 24 24" fill="#fff"><path d="M9 16.170 5.530 12.700a.9959.9959 0 0 0-1.410 0c-.390.390-.390 1.020 0 1.410l4.180 4.180c.390.390 1.020.390 1.410 0L20.290 7.710c.390-.390.390-1.020 0-1.410a.9959.9959 0 0 0-1.410 0L9 16.170z"/></svg></div>
<div class="b" style="left:1336px;top:536px;width:28px;height:28px;background:#3063c5;border-radius:6px;"><svg style="position:absolute;left:0;top:0" width="28" height="28" viewBox="0 0 24 24" fill="#fff"><path d="M9 16.170 5.530 12.700a.9959.9959 0 0 0-1.410 0c-.390.390-.390 1.020 0 1.410l4.180 4.180c.390.390 1.020.390 1.410 0L20.290 7.710c.390-.390.390-1.020 0-1.410a.9959.9959 0 0 0-1.410 0L9 16.170z"/></svg></div>
<div class="b" style="left:1336px;top:588px;width:28px;height:28px;background:#3063c5;border-radius:6px;"><svg style="position:absolute;left:0;top:0" width="28" height="28" viewBox="0 0 24 24" fill="#fff"><path d="M9 16.170 5.530 12.700a.9959.9959 0 0 0-1.410 0c-.390.390-.390 1.020 0 1.410l4.180 4.180c.390.390 1.020.390 1.410 0L20.290 7.710c.390-.390.390-1.020 0-1.410a.9959.9959 0 0 0-1.410 0L9 16.170z"/></svg></div>
<div class="b" style="left:1336px;top:640px;width:28px;height:28px;background:#3063c5;border-radius:6px;"><svg style="position:absolute;left:0;top:0" width="28" height="28" viewBox="0 0 24 24" fill="#fff"><path d="M9 16.170 5.530 12.700a.9959.9959 0 0 0-1.410 0c-.390.390-.390 1.020 0 1.410l4.180 4.180c.390.390 1.020.390 1.410 0L20.290 7.710c.390-.390.390-1.020 0-1.410a.9959.9959 0 0 0-1.410 0L9 16.170z"/></svg></div>
<div class="b" style="left:1336px;top:692px;width:28px;height:28px;background:#3063c5;border-radius:6px;"><svg style="position:absolute;left:0;top:0" width="28" height="28" viewBox="0 0 24 24" fill="#fff"><path d="M9 16.170 5.530 12.700a.9959.9959 0 0 0-1.410 0c-.390.390-.390 1.020 0 1.410l4.180 4.180c.390.390 1.020.390 1.410 0L20.290 7.710c.390-.390.390-1.020 0-1.410a.9959.9959 0 0 0-1.410 0L9 16.170z"/></svg></div>
<div class="b" style="left:1336px;top:744px;width:28px;height:28px;background:#3063c5;border-radius:6px;"><svg style="position:absolute;left:0;top:0" width="28" height="28" viewBox="0 0 24 24" fill="#fff"><path d="M9 16.170 5.530 12.700a.9959.9959 0 0 0-1.410 0c-.390.390-.390 1.020 0 1.410l4.180 4.180c.390.390 1.020.390 1.410 0L20.290 7.710c.390-.390.390-1.020 0-1.410a.9959.9959 0 0 0-1.410 0L9 16.170z"/></svg></div>
<div class="b" style="left:1336px;top:796px;width:28px;height:28px;background:#3063c5;border-radius:6px;"><svg style="position:absolute;left:0;top:0" width="28" height="28" viewBox="0 0 24 24" fill="#fff"><path d="M9 16.170 5.530 12.700a.9959.9959 0 0 0-1.410 0c-.390.390-.390 1.020 0 1.410l4.180 4.180c.390.390 1.020.390 1.410 0L20.290 7.710c.390-.390.390-1.020 0-1.410a.9959.9959 0 0 0-1.410 0L9 16.170z"/></svg></div>
<div class="b" style="left:1336px;top:848px;width:28px;height:28px;background:#3063c5;border-radius:6px;"><svg style="position:absolute;left:0;top:0" width="28" height="28" viewBox="0 0 24 24" fill="#fff"><path d="M9 16.170 5.530 12.700a.9959.9959 0 0 0-1.410 0c-.390.390-.390 1.020 0 1.410l4.180 4.180c.390.390 1.020.390 1.410 0L20.290 7.710c.390-.390.390-1.020 0-1.410a.9959.9959 0 0 0-1.410 0L9 16.170z"/></svg></div>
<div class="b" style="left:1336px;top:900px;width:28px;height:28px;background:#3063c5;border-radius:6px;"><svg style="position:absolute;left:0;top:0" width="28" height="28" viewBox="0 0 24 24" fill="#fff"><path d="M9 16.170 5.530 12.700a.9959.9959 0 0 0-1.410 0c-.390.390-.390 1.020 0 1.410l4.180 4.180c.390.390 1.020.390 1.410 0L20.290 7.710c.390-.390.390-1.020 0-1.410a.9959.9959 0 0 0-1.410 0L9 16.170z"/></svg></div>
<div class="b" style="left:1336px;top:952px;width:28px;height:28px;background:#3063c5;border-radius:6px;"><svg style="position:absolute;left:0;top:0" width="28" height="28" viewBox="0 0 24 24" fill="#fff"><path d="M9 16.170 5.530 12.700a.9959.9959 0 0 0-1.410 0c-.390.390-.390 1.020 0 1.410l4.180 4.180c.390.390 1.020.390 1.410 0L20.290 7.710c.390-.390.390-1.020 0-1.410a.9959.9959 0 0 0-1.410 0L9 16.170z"/></svg></div>
<div class="b" style="left:1336px;top:1004px;width:28px;height:28px;background:#3063c5;border-radius:6px;"><svg style="position:absolute;left:0;top:0" width="28" height="28" viewBox="0 0 24 24" fill="#fff"><path d="M9 16.170 5.530 12.700a.9959.9959 0 0 0-1.410 0c-.390.390-.390 1.020 0 1.410l4.180 4.180c.390.390 1.020.390 1.410 0L20.290 7.710c.390-.390.390-1.020 0-1.410a.9959.9959 0 0 0-1.410 0L9 16.170z"/></svg></div>
<svg class="b" style="left:1331.2px;top:476.2px" width="37" height="37" viewBox="0 0 24 24" fill="#32383e"><path d="M7 6h10l-5.010 6.300L7 6zm-2.750-.390C6.270 8.200 10 13 10 13v6c0 .550.450 1 1 1h2c.550 0 1-.450 1-1v-6s3.720-4.800 5.740-7.390c.510-.660.040-1.610-.790-1.610H5.040c-.830 0-1.300.950-.790 1.610z"/></svg>
<div class="b" style="left:1336px;top:1127px;width:540px;height:14px;background:#cfd6e0;border-radius:7px;"></div>
<div class="b" style="left:1325.7px;top:1119px;width:2.0px;height:31px;background:#cdd7e1;"></div>
<div class="b" style="left:2526px;top:407px;width:7px;height:324px;background:#fbfcfe"></div>
<div class="b" style="left:2526px;top:732.5px;width:7px;height:50px;background:#f9e1c4"></div>
<div class="b" style="left:2526px;top:784.5px;width:7px;height:262px;background:#fbfcfe"></div>
<div class="b" style="left:2503px;top:407px;width:35px;height:40px;background:#fbfcfe"></div>
<svg class="b" style="left:2505px;top:409px" width="33" height="33" viewBox="0 0 24 24" fill="#32383e"><path d="M19.43 12.98c.04-.32.07-.64.07-.98 0-.34-.03-.66-.07-.98l2.11-1.65c.19-.15.24-.42.12-.64l-2-3.46c-.09-.16-.26-.25-.44-.25-.06 0-.12.01-.17.03l-2.49 1c-.52-.4-1.08-.73-1.69-.98l-.38-2.65C14.46 2.18 14.25 2 14 2h-4c-.25 0-.46.18-.49.42l-.38 2.65c-.61.25-1.17.59-1.69.98l-2.49-1c-.06-.02-.12-.03-.18-.03-.17 0-.34.09-.43.25l-2 3.46c-.13.22-.07.49.12.64l2.11 1.65c-.04.32-.07.65-.07.98 0 .33.03.66.07.98l-2.11 1.65c-.19.15-.24.42-.12.64l2 3.46c.09.16.26.25.44.25.06 0 .12-.01.17-.03l2.49-1c.52.4 1.08.73 1.69.98l.38 2.65c.03.24.24.42.49.42h4c.25 0 .46-.18.49-.42l.38-2.65c.61-.25 1.17-.59 1.69-.98l2.49 1c.06.02.12.03.18.03.17 0 .34-.09.43-.25l2-3.46c.12-.22.07-.49-.12-.64l-2.11-1.65zm-1.98-1.71c.04.31.05.52.05.73 0 .21-.02.43-.05.73l-.14 1.13.89.7 1.08.84-.7 1.21-1.27-.51-1.04-.42-.9.68c-.43.32-.84.56-1.25.73l-1.06.43-.16 1.13-.2 1.35h-1.400l-.190-1.350-.160-1.130-1.060-.430c-.430-.180-.830-.410-1.230-.710l-.910-.700-1.060.430-1.270.510-.700-1.210 1.080-.840.890-.700-.140-1.130c-.030-.310-.050-.540-.050-.740s.020-.430.050-.730l.140-1.130-.890-.700-1.080-.840.700-1.210 1.270.510 1.040.420.900-.680c.430-.320.840-.560 1.250-.730l1.060-.430.160-1.130.200-1.350h1.390l.190 1.350.160 1.130 1.060.430c.430.180.830.410 1.230.710l.910.700 1.060-.430 1.270-.510.700 1.210-1.070.850-.890.700.140 1.130zM12 8c-2.210 0-4 1.790-4 4s1.790 4 4 4 4-1.790 4-4-1.790-4-4-4zm0 6c-1.100 0-2-.900-2-2s.900-2 2-2 2 .900 2 2-.900 2-2 2z"/></svg>
</div>
<div class="b" style="left:1323.7px;top:407px;width:1214.3px;height:748px;border:2px solid #cdd7e1;border-radius:9px;"></div>
</div></body></html>
